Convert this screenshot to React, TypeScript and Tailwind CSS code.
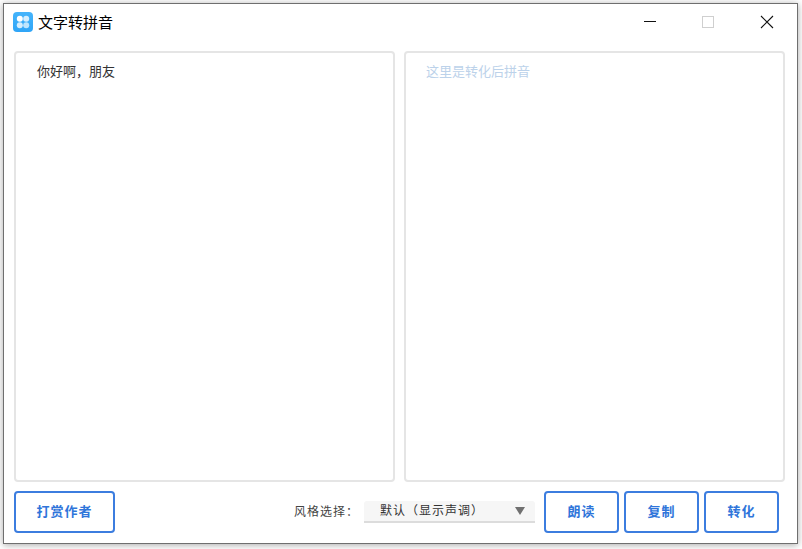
const cjk = 'font-["Liberation_Sans","Noto_Sans_CJK_SC",sans-serif]';

function ActionButton({ label, className }: { label: string; className: string }) {
  return (
    <button
      className={`h-[42px] rounded-[4px] border-2 border-[#3c7ddf] bg-white text-[13px] font-bold tracking-[1px] text-[#2f75da] ${className}`}
    >
      {label}
    </button>
  );
}

function AppIcon() {
  return (
    <svg width="20" height="20" viewBox="0 0 20 20" className="shrink-0">
      <defs>
        <linearGradient id="bg" x1="0" y1="0" x2="0" y2="1">
          <stop offset="0" stopColor="#45b4fb" />
          <stop offset="1" stopColor="#2fa5f7" />
        </linearGradient>
      </defs>
      <rect width="20" height="20" rx="4" fill="url(#bg)" />
      <circle cx="6.8" cy="6.8" r="3" fill="#ffffff" />
      <circle cx="13.2" cy="6.8" r="3" fill="#d5eefe" />
      <circle cx="6.8" cy="13.2" r="3" fill="#d5eefe" />
      <circle cx="13.2" cy="13.2" r="3" fill="#bfe5fd" />
    </svg>
  );
}

function TitleBar() {
  return (
    <div className="flex h-[36px] items-center pr-[12px]">
      <AppIcon />
      <span className="ml-[5px] mt-[1px] text-[15px] leading-none text-black">文字转拼音</span>
      <div className="ml-auto flex items-center">
        <svg width="14" height="14" viewBox="0 0 14 14" className="mr-[44px]">
          <path d="M2 6.5H14" stroke="#111" strokeWidth="1" />
        </svg>
        <svg width="14" height="14" viewBox="0 0 14 14" className="mr-[46px]">
          <rect x="2.5" y="1.5" width="11" height="11" fill="none" stroke="#cfcfcf" />
        </svg>
        <svg width="14" height="14" viewBox="0 0 14 14">
          <path d="M1 1L13 13M13 1L1 13" stroke="#111" strokeWidth="1.1" />
        </svg>
      </div>
    </div>
  );
}

export default function App() {
  return (
    <div className={`h-[549px] w-[802px] overflow-hidden bg-white pl-[3px] pt-[3px] ${cjk}`}>
      <div className="flex h-[541px] w-[795px] flex-col border border-[#6f6f6f] bg-white pl-[10px] pr-[11px] shadow-[0_1px_7px_rgba(0,0,0,0.35)]">
        <div className="-ml-[1px]">
          <TitleBar />
        </div>
        <div className="mt-[11px] flex h-[431px] gap-[9px]">
          <div className="w-[381px] rounded-[4px] border-2 border-[#e5e5e5] px-[21px] py-[11px] text-[13px] leading-[16px] text-[#333]">
            {"你好啊\uFF0C朋友"}
          </div>
          <div className="w-[381px] rounded-[4px] border-2 border-[#e5e5e5] px-[20px] py-[11px] text-[13px] leading-[16px] text-[#bcd2ea]">
            这里是转化后拼音
          </div>
        </div>
        <div className="mt-[9px] flex items-center">
          <ActionButton label="打赏作者" className="w-[101px]" />
          <span className="ml-[179px] w-[61px] whitespace-nowrap text-[12px] tracking-[1px] text-[#444]">{"风格选择\uFF1A"}</span>
          <div className="ml-[9px] flex h-[22px] w-[171px] items-center justify-between rounded-t-[3px] border-b-2 border-[#dcdcdc] bg-[#f6f6f6] pl-[16px] pr-[10px] text-[12px] tracking-[1px] text-[#333]">
            <span>{"默认\uFF08显示声调\uFF09"}</span>
            <svg width="10" height="8" viewBox="0 0 10 8">
              <path d="M0 0H10L5 8Z" fill="#707070" />
            </svg>
          </div>
          <ActionButton label="朗读" className="ml-[9px] w-[75px]" />
          <ActionButton label="复制" className="ml-[5px] w-[75px]" />
          <ActionButton label="转化" className="ml-[5px] w-[75px]" />
        </div>
      </div>
    </div>
  );
}
